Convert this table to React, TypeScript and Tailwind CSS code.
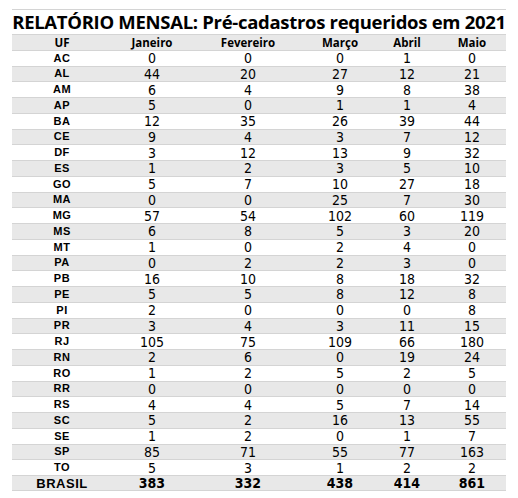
const rows: [string, number[]][] = [
  ["AC", [0, 0, 0, 1, 0]],
  ["AL", [44, 20, 27, 12, 21]],
  ["AM", [6, 4, 9, 8, 38]],
  ["AP", [5, 0, 1, 1, 4]],
  ["BA", [12, 35, 26, 39, 44]],
  ["CE", [9, 4, 3, 7, 12]],
  ["DF", [3, 12, 13, 9, 32]],
  ["ES", [1, 2, 3, 5, 10]],
  ["GO", [5, 7, 10, 27, 18]],
  ["MA", [0, 0, 25, 7, 30]],
  ["MG", [57, 54, 102, 60, 119]],
  ["MS", [6, 8, 5, 3, 20]],
  ["MT", [1, 0, 2, 4, 0]],
  ["PA", [0, 2, 2, 3, 0]],
  ["PB", [16, 10, 8, 18, 32]],
  ["PE", [5, 5, 8, 12, 8]],
  ["PI", [2, 0, 0, 0, 8]],
  ["PR", [3, 4, 3, 11, 15]],
  ["RJ", [105, 75, 109, 66, 180]],
  ["RN", [2, 6, 0, 19, 24]],
  ["RO", [1, 2, 5, 2, 5]],
  ["RR", [0, 0, 0, 0, 0]],
  ["RS", [4, 4, 5, 7, 14]],
  ["SC", [5, 2, 16, 13, 55]],
  ["SE", [1, 2, 0, 1, 7]],
  ["SP", [85, 71, 55, 77, 163]],
  ["TO", [5, 3, 1, 2, 2]],
];

const months = ["Janeiro", "Fevereiro", "Março", "Abril", "Maio"];
const totals = [383, 332, 438, 414, 861];

const cols = "grid grid-cols-[100px_80px_112px_72px_62px_68px]";
const num = "text-center font-['Liberation_Sans_Narrow','DejaVu_Sans_Condensed',sans-serif] text-[14px] text-black";

export default function App() {
  return (
    <div className="w-[518px] h-[498px] bg-white pt-[9px] pl-[12px]">
      <div className="w-[494px] border-t border-[#d4d4d4]">
        <div className="h-[24px] flex items-center justify-center font-['Open_Sans',sans-serif] font-bold text-[18.5px] text-black tracking-[-0.3px] leading-none whitespace-nowrap">
          RELATÓRIO MENSAL: Pré-cadastros requeridos em 2021
        </div>
        <div className={`${cols} h-[15.76px] items-center bg-[#e8e8e8] border-t border-[#d4d4d4] font-['Open_Sans',sans-serif] font-bold text-[11.5px] text-black leading-none`}>
          <div className="text-center">UF</div>
          {months.map((m) => (
            <div key={m} className="text-center">{m}</div>
          ))}
        </div>
        {rows.map(([uf, vals], i) => (
          <div
            key={uf}
            className={`${cols} h-[15.76px] items-center border-t border-[#d4d4d4] leading-none ${i % 2 === 1 ? "bg-[#e8e8e8]" : "bg-white"}`}
          >
            <div className="text-center font-['Liberation_Sans',sans-serif] font-bold text-[11px] tracking-[0.5px] text-black">{uf}</div>
            {vals.map((v, j) => (
              <div key={j} className={num}>{v}</div>
            ))}
          </div>
        ))}
        <div className={`${cols} h-[15.76px] items-center bg-[#e8e8e8] border-y border-[#d4d4d4] leading-none`}>
          <div className="text-center font-['Liberation_Sans',sans-serif] font-bold text-[13px] tracking-[0.5px] text-black">BRASIL</div>
          {totals.map((v, j) => (
            <div key={j} className={`${num} font-bold`}>{v}</div>
          ))}
        </div>
      </div>
    </div>
  );
}
